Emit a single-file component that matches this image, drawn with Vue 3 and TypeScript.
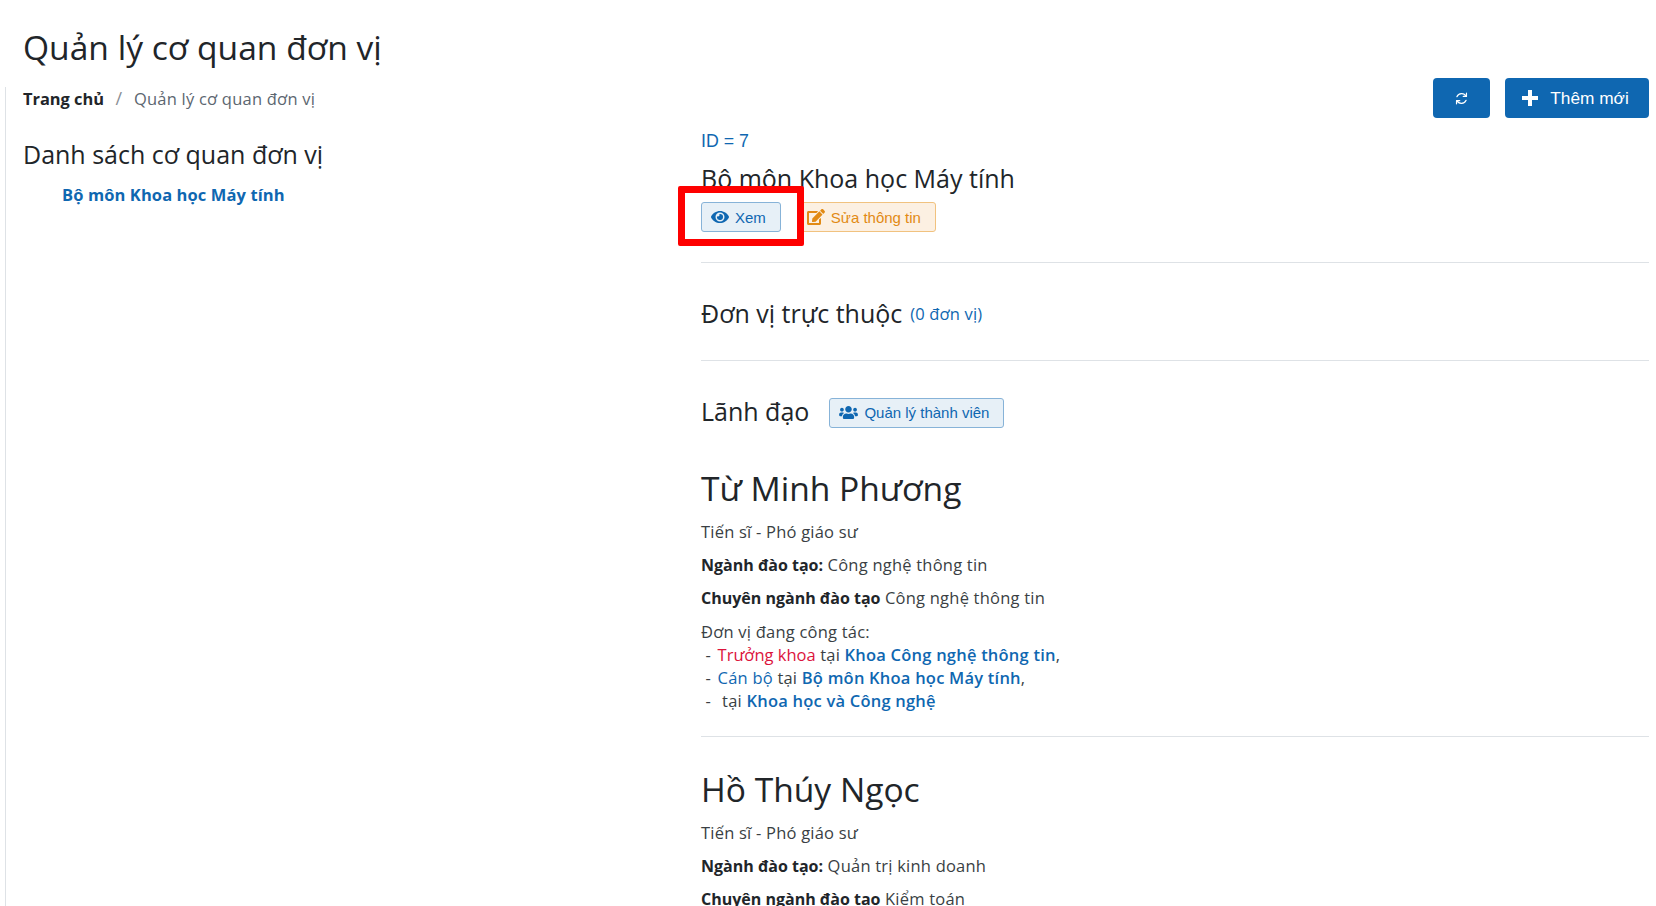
<template>
  <div class="page">
    <h1 class="page-title">Quản lý cơ quan đơn vị</h1>
    <div class="content">
      <div class="toolbar">
        <nav class="breadcrumb">
          <b>Trang chủ</b>
          <span class="sep">/</span>
          <span class="current">Quản lý cơ quan đơn vị</span>
        </nav>
        <div class="actions">
          <button class="btn-solid btn-refresh" aria-label="Làm mới">
            <svg viewBox="0 0 24 24" width="17" height="17" fill="none" stroke="#fff" stroke-width="1.7" stroke-linecap="round" stroke-linejoin="round">
              <path d="M5.5 9.5a7.2 7.2 0 0 1 13-.5" />
              <path d="M19 4.5V9h-4.5" />
              <path d="M18.5 14.5a7.2 7.2 0 0 1-13 .5" />
              <path d="M5 19.5V15h4.5" />
            </svg>
          </button>
          <button class="btn-solid btn-add">
            <svg viewBox="0 0 18 18" width="18" height="18" fill="#fff"><path d="M7 1h4v6h6v4h-6v6H7v-6H1V7h6z" /></svg>
            Thêm mới
          </button>
        </div>
      </div>

      <div class="columns">
        <aside class="tree">
          <h2 class="tree-title">Danh sách cơ quan đơn vị</h2>
          <a class="tree-item">Bộ môn Khoa học Máy tính</a>
        </aside>

        <main class="detail">
          <div class="id-line">ID = {{ unitId }}</div>
          <h2 class="unit-name">Bộ môn Khoa học Máy tính</h2>
          <div class="unit-buttons">
            <button class="btn-soft btn-blue btn-view">
              <svg viewBox="0 0 576 512" width="18" height="16" fill="currentColor"><path :d="icons.eye" /></svg>
              Xem
              <span class="highlight"></span>
            </button>
            <button class="btn-soft btn-orange">
              <svg viewBox="0 0 576 512" width="18" height="16" fill="currentColor"><path :d="icons.edit" /></svg>
              Sửa thông tin
            </button>
          </div>
          <hr class="rule first" />

          <div class="section-row">
            <h2 class="section-title">Đơn vị trực thuộc</h2>
            <span class="count">(0 đơn vị)</span>
          </div>
          <hr class="rule second" />

          <div class="section-row leader-row">
            <h2 class="section-title">Lãnh đạo</h2>
            <button class="btn-soft btn-blue btn-members">
              <svg viewBox="0 0 640 512" width="19" height="15" fill="currentColor"><path :d="icons.users" /></svg>
              Quản lý thành viên
            </button>
          </div>

          <section v-for="(person, index) in people" :key="person.name" class="person">
            <h3 class="person-name">{{ person.name }}</h3>
            <p class="line">{{ person.degree }}</p>
            <p class="line"><b>Ngành đào tạo:</b> {{ person.major }}</p>
            <p class="line"><b>Chuyên ngành đào tạo</b> {{ person.specialty }}</p>
            <div v-if="person.units.length" class="units">
              <div>Đơn vị đang công tác:</div>
              <div v-for="unit in person.units" :key="unit.place">
                &nbsp;<span class="dash">-</span>&nbsp;<span :class="unit.tone">{{ unit.role }}</span>&nbsp;tại <a class="unit-link">{{ unit.place }}</a>{{ unit.comma ? ',' : '' }}
              </div>
            </div>
            <hr v-if="index === 0" class="rule third" />
          </section>
        </main>
      </div>
    </div>
  </div>
</template>

<script setup lang="ts">
const unitId = 7

// đường dẫn icon dùng chung cho các nút
const icons = {
  eye: 'M572.52 241.4C518.29 135.59 410.93 64 288 64S57.68 135.64 3.48 241.41a32.35 32.35 0 0 0 0 29.19C57.71 376.41 165.07 448 288 448s230.32-71.64 284.52-177.41a32.35 32.35 0 0 0 0-29.19zM288 400a144 144 0 1 1 144-144 143.93 143.93 0 0 1-144 144zm0-240a95.31 95.31 0 0 0-25.31 3.79 47.85 47.85 0 0 1-66.9 66.9A95.78 95.78 0 1 0 288 160z',
  edit: 'M402.6 83.2l90.2 90.2c3.8 3.8 3.8 10 0 13.8L274.4 405.6l-92.8 10.3c-12.4 1.4-22.9-9.1-21.5-21.5l10.3-92.8L388.8 83.2c3.8-3.8 10-3.8 13.8 0zm162-22.9l-48.8-48.8c-15.2-15.2-39.9-15.2-55.2 0l-35.4 35.4c-3.8 3.8-3.8 10 0 13.8l90.2 90.2c3.8 3.8 10 3.8 13.8 0l35.4-35.4c15.2-15.3 15.2-40 0-55.2zM384 346.2V448H64V128h229.8c3.2 0 6.2-1.3 8.5-3.5l40-40c7.6-7.6 2.2-20.5-8.5-20.5H48C21.5 64 0 85.5 0 112v352c0 26.5 21.5 48 48 48h352c26.5 0 48-21.5 48-48V306.2c0-10.7-12.9-16-20.5-8.5l-40 40c-2.2 2.3-3.5 5.3-3.5 8.5z',
  users: 'M96 224c35.3 0 64-28.7 64-64s-28.7-64-64-64-64 28.7-64 64 28.7 64 64 64zm448 0c35.3 0 64-28.7 64-64s-28.7-64-64-64-64 28.7-64 64 28.7 64 64 64zm32 32h-64c-17.6 0-33.5 7.1-45.1 18.6 40.3 22.1 68.9 62 75.1 109.4h66c17.7 0 32-14.3 32-32v-32c0-35.3-28.7-64-64-64zm-256 0c61.9 0 112-50.1 112-112S381.9 32 320 32 208 82.1 208 144s50.1 112 112 112zm76.8 32h-8.3c-20.8 10-43.9 16-68.5 16s-47.6-6-68.5-16h-8.3C179.6 288 128 339.6 128 403.2V432c0 26.5 21.5 48 48 48h288c26.5 0 48-21.5 48-48v-28.8c0-63.6-51.6-115.2-115.2-115.2zm-223.7-13.4C161.5 263.1 145.6 256 128 256H64c-35.3 0-64 28.7-64 64v32c0 17.7 14.3 32 32 32h65.9c6.3-47.4 34.9-87.3 75.2-109.4z',
}

const people = [
  {
    name: 'Từ Minh Phương',
    degree: 'Tiến sĩ - Phó giáo sư',
    major: 'Công nghệ thông tin',
    specialty: 'Công nghệ thông tin',
    units: [
      { role: 'Trưởng khoa', tone: 'red', place: 'Khoa Công nghệ thông tin', comma: true },
      { role: 'Cán bộ', tone: 'blue', place: 'Bộ môn Khoa học Máy tính', comma: true },
      { role: '', tone: 'blue', place: 'Khoa học và Công nghệ', comma: false },
    ],
  },
  {
    name: 'Hồ Thúy Ngọc',
    degree: 'Tiến sĩ - Phó giáo sư',
    major: 'Quản trị kinh doanh',
    specialty: 'Kiểm toán',
    units: [],
  },
]
</script>

<style scoped>
.page {
  height: 906px;
  overflow: hidden;
  background: #fff;
  color: #212529;
  font-family: "Open Sans", "Noto Sans", sans-serif;
  font-size: 16px;
}
.page-title {
  margin: 0;
  padding: 23px 0 0 23px;
  height: 87px;
  box-sizing: border-box;
  font-size: 33.6px;
  line-height: 48px;
  font-weight: 400;
}
.content {
  margin-left: 5px;
  border-left: 1px solid #dee2e6;
  padding-left: 17px;
  padding-right: 7px;
  height: 819px;
}
b {
  font-weight: 700;
  font-size: 16px;
  line-height: 1;
  letter-spacing: 0;
}
.toolbar {
  display: flex;
  justify-content: space-between;
  align-items: flex-start;
  height: 35px;
}
.breadcrumb {
  line-height: 23px;
  font-size: 16.5px;
  letter-spacing: 0.22px;
}
.breadcrumb b {
  font-size: 16.4px;
}
.sep {
  margin: 0 11.5px;
  color: #8a8f96;
  font-size: 18px;
}
.current {
  color: #5c6670;
}
.actions {
  display: flex;
  gap: 15px;
  margin-top: -9px;
}
.btn-solid {
  display: flex;
  align-items: center;
  justify-content: center;
  gap: 11px;
  height: 40px;
  border: none;
  border-radius: 4px;
  background: #0f67b1;
  color: #fff;
  font-family: "Liberation Sans", Arial, sans-serif;
  font-size: 17.3px;
}
.btn-refresh {
  width: 57px;
}
.btn-add {
  width: 144px;
  padding: 0 4px 0 0;
}
.columns {
  display: grid;
  grid-template-columns: 678px 1fr;
}
.tree-title {
  margin: 14px 0 0;
  font-size: 25px;
  line-height: 36px;
  font-weight: 400;
}
.tree-item {
  display: block;
  margin: 11px 0 0 39px;
  color: #0f67b1;
  font-weight: 700;
  font-size: 16.5px;
  letter-spacing: 0.1px;
  line-height: 24px;
}
.id-line {
  margin-top: 7px;
  color: #0f67b1;
  line-height: 24px;
  font-family: "Liberation Sans", Arial, sans-serif;
  font-size: 17.8px;
}
.unit-name {
  margin: 9px 0 0;
  font-size: 25px;
  line-height: 32px;
  font-weight: 400;
}
.unit-buttons {
  display: flex;
  gap: 16px;
  margin-top: 8px;
}
.btn-soft {
  display: inline-flex;
  align-items: center;
  gap: 6px;
  height: 30px;
  padding: 0 14px 0 9px;
  border-radius: 3px;
  font-family: "Liberation Sans", Arial, sans-serif;
  font-size: 15px;
}
.btn-blue {
  border: 1px solid #87b3d8;
  background: #e7f0f7;
  color: #0f67b1;
}
.btn-orange {
  border: 1px solid #f1c27f;
  background: #fcf0e2;
  color: #e28a14;
}
.btn-view {
  position: relative;
}
.btn-members {
  margin-top: 3px;
}
.highlight {
  position: absolute;
  left: -24px;
  top: -17px;
  width: 126px;
  height: 60px;
  box-sizing: border-box;
  border: 7px solid #fe0000;
  border-radius: 2px;
}
.rule {
  margin: 0;
  border: none;
  border-top: 1px solid #dee2e6;
}
.rule.first {
  margin-top: 30px;
}
.section-row {
  display: flex;
  align-items: center;
}
.section-row:not(.leader-row) {
  margin-top: 32px;
  gap: 8px;
}
.section-title {
  margin: 0;
  font-size: 25px;
  line-height: 36px;
  font-weight: 400;
}
.count {
  color: #0f67b1;
  font-size: 16.5px;
  letter-spacing: 0.15px;
}
.rule.second {
  margin-top: 29px;
}
.leader-row {
  margin-top: 32px;
  gap: 20px;
}
.person-name {
  margin: 36px 0 0;
  font-size: 33.6px;
  line-height: 46px;
  font-weight: 400;
}
.person + .person .person-name {
  margin-top: 29px;
}
.line {
  margin: 10px 0 0;
  line-height: 23px;
  color: #3a3f44;
  font-size: 16.5px;
  letter-spacing: 0.22px;
}
.person-name + .line {
  margin-top: 9px;
}
.line b {
  color: #212529;
}
.units {
  margin-top: 11px;
  line-height: 23px;
  color: #3a3f44;
  font-size: 16.5px;
  letter-spacing: 0.22px;
}
.dash {
  margin-right: 2px;
}
.red {
  color: #dc143c;
  letter-spacing: 0;
}
.blue {
  color: #0f67b1;
}
.unit-link {
  color: #0f67b1;
  font-weight: 600;
}
.rule.third {
  margin-top: 24px;
}
</style>

<style>
html,
body {
  margin: 0;
  overflow: hidden;
}
</style>
